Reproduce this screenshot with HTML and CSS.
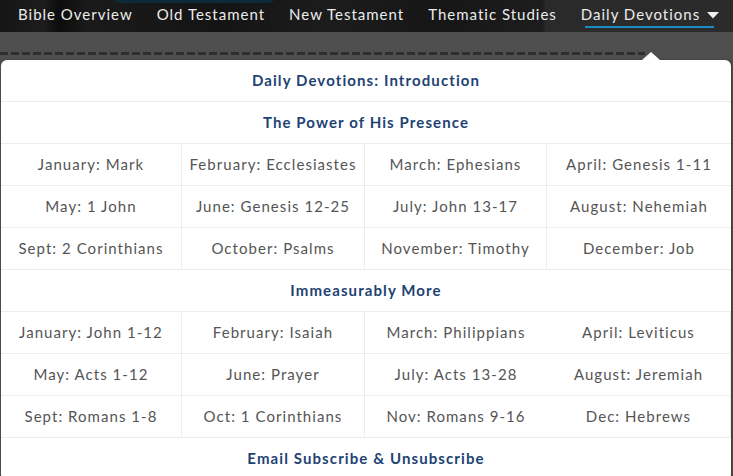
FILE: index.html
```html
<!DOCTYPE html>
<html>
<head>
<meta charset="utf-8">
<link rel="stylesheet" href="styles.css">
</head>
<body>
<header class="nav">
  <div class="nav-bg"><span class="glow"></span></div>
  <ul class="nav-list">
    <li class="nav-item">Bible Overview</li>
    <li class="nav-item">Old Testament</li>
    <li class="nav-item">New Testament</li>
    <li class="nav-item">Thematic Studies</li>
    <li class="nav-item active">Daily Devotions
      <svg class="caret-down" width="12" height="7" viewBox="0 0 12 7"><path d="M0 0H12L6 6.5Z" fill="#f0f0f0"/></svg>
    </li>
  </ul>
</header>
<div class="band">
  <div class="dashes"></div>
</div>
<div class="menu">
  <span class="menu-arrow"></span>
  <div class="grid">
    <div class="cell head">Daily Devotions: Introduction</div>
    <div class="cell head">The Power of His Presence</div>
    <div class="cell">January: Mark</div>
    <div class="cell">February: Ecclesiastes</div>
    <div class="cell">March: Ephesians</div>
    <div class="cell">April: Genesis 1-11</div>
    <div class="cell">May: 1 John</div>
    <div class="cell">June: Genesis 12-25</div>
    <div class="cell">July: John 13-17</div>
    <div class="cell">August: Nehemiah</div>
    <div class="cell">Sept: 2 Corinthians</div>
    <div class="cell">October: Psalms</div>
    <div class="cell">November: Timothy</div>
    <div class="cell">December: Job</div>
    <div class="cell head">Immeasurably More</div>
    <div class="cell">January: John 1-12</div>
    <div class="cell">February: Isaiah</div>
    <div class="cell">March: Philippians</div>
    <div class="cell">April: Leviticus</div>
    <div class="cell">May: Acts 1-12</div>
    <div class="cell">June: Prayer</div>
    <div class="cell">July: Acts 13-28</div>
    <div class="cell">August: Jeremiah</div>
    <div class="cell">Sept: Romans 1-8</div>
    <div class="cell">Oct: 1 Corinthians</div>
    <div class="cell">Nov: Romans 9-16</div>
    <div class="cell">Dec: Hebrews</div>
    <div class="cell head last">Email Subscribe &amp; Unsubscribe</div>
  </div>
</div>
</body>
</html>
```
FILE: styles.css
```css
* { box-sizing: border-box; }
html, body { margin: 0; padding: 0; }
body {
  width: 733px;
  height: 476px;
  overflow: hidden;
  position: relative;
  background: #4f4f4f;
  font-family: Lato, "Open Sans", sans-serif;
}
.nav {
  position: relative;
  height: 32px;
  background: linear-gradient(90deg, #151515 0%, #1c1c1c 6%, #0c0c0c 8%, #1a1a1a 12%, #141414 30%, #1c1c1c 45%, #161616 60%, #1d1d1d 74%, #2a2a2a 74.5%, #2b2b2b 100%);
}
.nav-bg { position: absolute; inset: 0; overflow: hidden; }
.glow {
  position: absolute;
  left: 112px;
  top: -20px;
  width: 164px;
  height: 23px;
  border-radius: 8px;
  background: #0d2a38;
}
.nav-list {
  position: relative;
  list-style: none;
  margin: 0;
  padding: 0 0 0 18px;
  display: flex;
  gap: 24px;
  height: 32px;
  align-items: flex-start;
}
.nav-item {
  color: #ececec;
  font-size: 15px;
  letter-spacing: 1px;
  line-height: 29px;
  white-space: nowrap;
}
.nav-item.active {
  display: flex;
  align-items: center;
  gap: 7px;
  position: relative;
}
.nav-item.active::after {
  content: "";
  position: absolute;
  left: 4px;
  right: 5px;
  top: 26px;
  height: 2px;
  background: #1d8ac4;
}
.caret-down { margin-top: 2px; }
.band {
  height: 444px;
  padding-top: 20px;
}
.dashes {
  height: 3px;
  width: 645px;
  background: repeating-linear-gradient(90deg, #2f2f2f 0 8px, transparent 8px 11px);
}
.menu {
  position: absolute;
  left: 1px;
  top: 60px;
  width: 730px;
  background: #fff;
  border-radius: 6px;
  box-shadow: 1px 0 3px rgba(0,0,0,0.25);
}
.menu-arrow {
  position: absolute;
  left: 641px;
  top: -8px;
  width: 0;
  height: 0;
  border-left: 9px solid transparent;
  border-right: 9px solid transparent;
  border-bottom: 8px solid #fff;
}
.grid {
  display: grid;
  grid-template-columns: 181px 183px 182px 184px;
}
.cell {
  height: 42px;
  display: flex;
  align-items: center;
  justify-content: center;
  font-size: 15px;
  letter-spacing: 1.05px;
  color: #555;
  border-bottom: 1px solid #ececec;
  border-right: 1px solid #ececec;
  white-space: nowrap;
  padding-bottom: 2px;
}
.cell:nth-child(4n+2) { border-right: 0; }
.cell.head {
  grid-column: 1 / -1;
  font-weight: 700;
  letter-spacing: 1.1px;
  color: #1e4373;
  border-right: 0;
}
.cell.last { border-bottom: 0; }
```
